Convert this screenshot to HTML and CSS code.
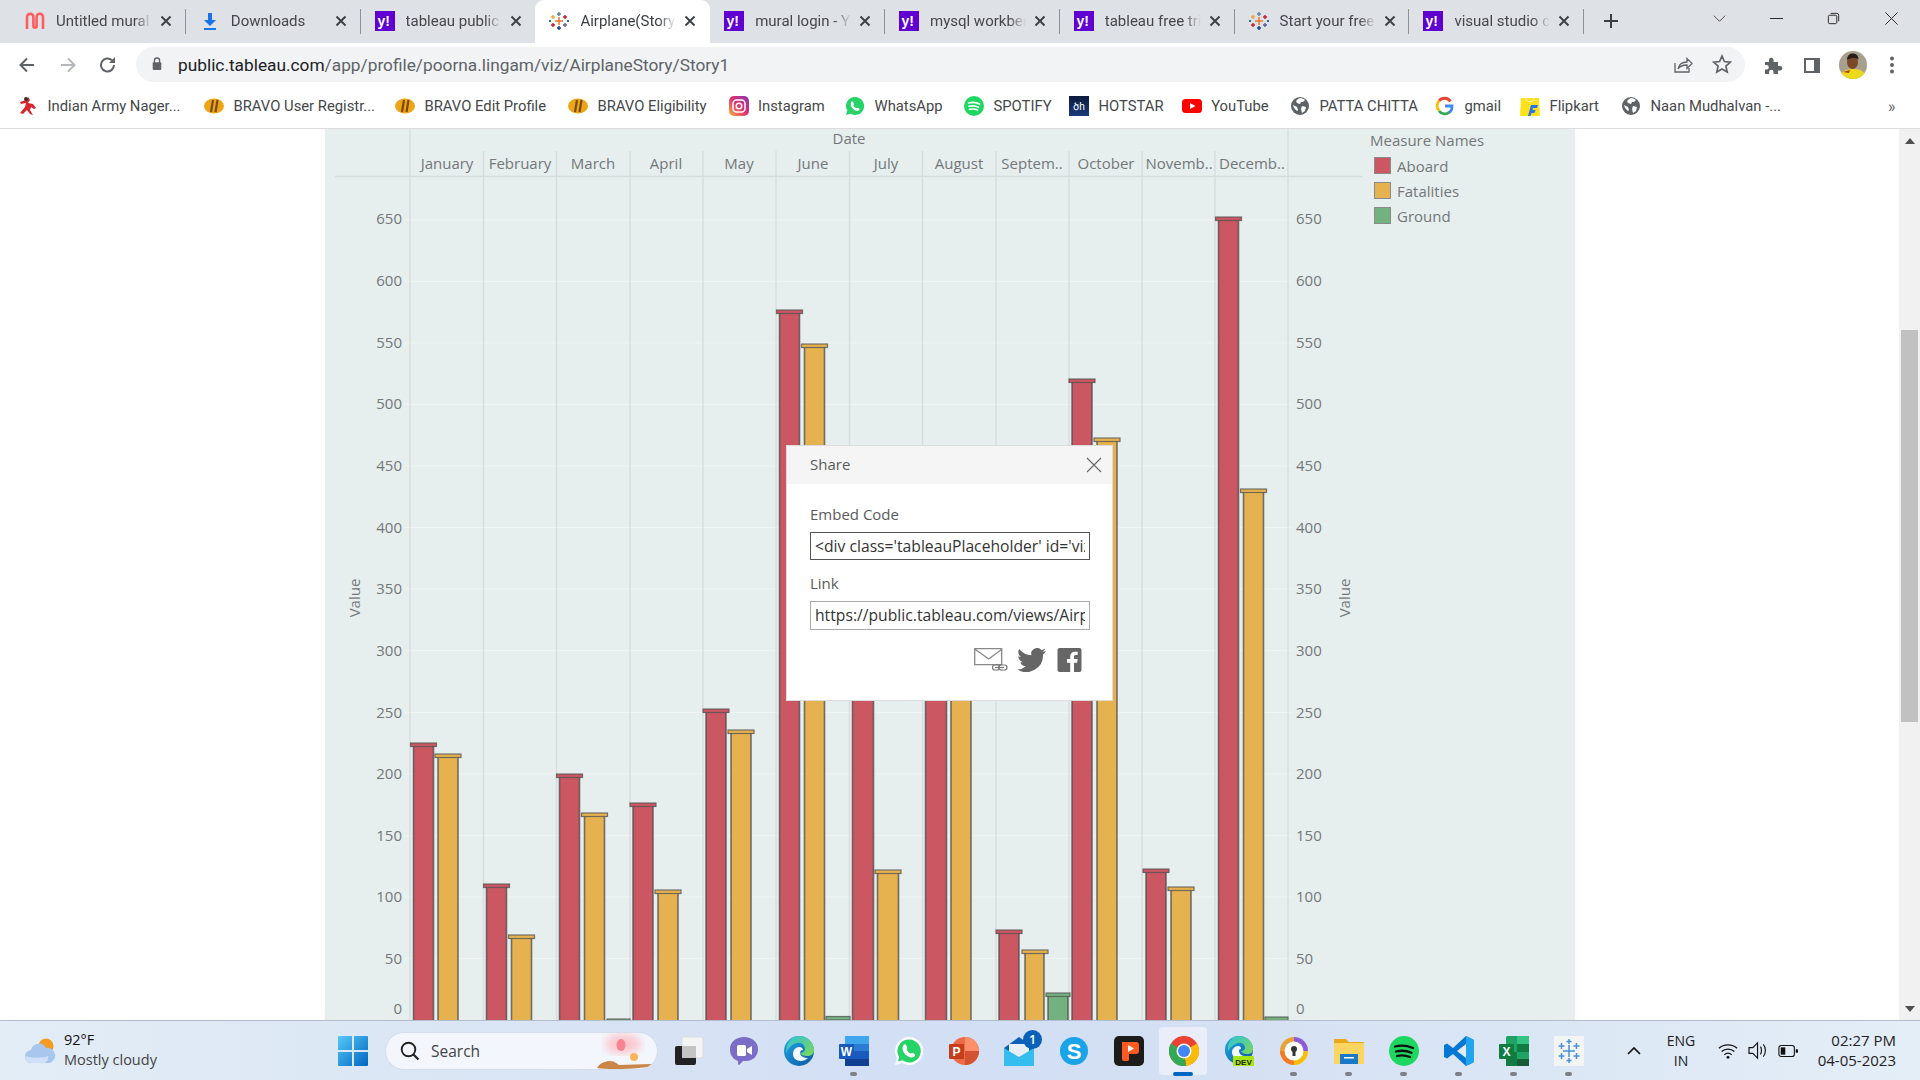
FILE: index.html
```html
<!DOCTYPE html>
<html lang="en">
<head>
<meta charset="utf-8">
<title>Airplane(Story) - Tableau Public</title>
<link rel="stylesheet" href="styles.css">
</head>
<body>
<svg class="defs" width="0" height="0" aria-hidden="true">
  <symbol id="yahoo" viewBox="0 0 20 20"><rect width="20" height="20" fill="#6001d2"/><text x="2.500" y="15" class="yh">y!</text></symbol>
  <symbol id="tabx" viewBox="0 0 12 12"><path d="M1.500 1.500l9 9M10.500 1.500l-9 9" stroke="#3c4043" stroke-width="1.900" fill="none"/></symbol>
  <symbol id="tableau" viewBox="0 0 20 20">
    <g fill="none" stroke-width="1.500">
      <path d="M10 6v8M6 10h8" stroke="#e8762c"/>
      <path d="M10 1v4M8 3h4" stroke="#5b879b"/>
      <path d="M10 15v4M8 17h4" stroke="#1f447e"/>
      <path d="M4 4v4M2 6h4" stroke="#f0a93a"/>
      <path d="M16 4v4M14 6h4" stroke="#c72035"/>
      <path d="M4 12v4M2 14h4" stroke="#c72035"/>
      <path d="M16 12v4M14 14h4" stroke="#5b6591"/>
      <path d="M1 9v2M0 10h2M19 9v2M18 10h2" stroke="#1f6b8a"/>
    </g>
  </symbol>
  <symbol id="globe" viewBox="0 0 20 20"><circle cx="10" cy="10" r="9" fill="#5f6368"/><path d="M10 2c2 0 4 1 5 2l-2 2h-2l-1 2-3-1-1-2 2-2zM12 10l4 1-1 4-3 2-1-4zM3 9l4 2 1 3-1 1-3-3z" fill="#fff"/></symbol>
  <symbol id="bravo" viewBox="0 0 20 20"><ellipse cx="10" cy="10" rx="10" ry="7.500" fill="#eca514"/><path d="M9 4 7 16M13.500 4l-2 12" stroke="#7b4a12" stroke-width="2.200" fill="none"/></symbol>
</svg>

<header class="tabstrip">
  <div class="tab"><svg class="fav" viewBox="0 0 20 20"><path d="M2 18V6a3.200 3.200 0 0 1 6.400 0v9a1.600 1.600 0 0 0 3.200 0V6A3.200 3.200 0 0 1 18 6v12" fill="none" stroke="#ff5c5c" stroke-width="2.600"/></svg><span class="tab-title">Untitled mural - Mural</span><svg class="tab-x"><use href="#tabx"/></svg></div>
  <div class="tab"><svg class="fav" viewBox="0 0 20 20"><path d="M8 2h4v7h4l-6 6-6-6h4zM4 17h12v2H4z" fill="#1a73e8"/></svg><span class="tab-title">Downloads</span><svg class="tab-x"><use href="#tabx"/></svg></div>
  <div class="tab before-active"><svg class="fav"><use href="#yahoo"/></svg><span class="tab-title">tableau public - Yahoo</span><svg class="tab-x"><use href="#tabx"/></svg></div>
  <div class="tab active"><svg class="fav"><use href="#tableau"/></svg><span class="tab-title">Airplane(Story) - Tableau</span><svg class="tab-x"><use href="#tabx"/></svg></div>
  <div class="tab"><svg class="fav"><use href="#yahoo"/></svg><span class="tab-title">mural login - Yahoo</span><svg class="tab-x"><use href="#tabx"/></svg></div>
  <div class="tab"><svg class="fav"><use href="#yahoo"/></svg><span class="tab-title">mysql workbench</span><svg class="tab-x"><use href="#tabx"/></svg></div>
  <div class="tab"><svg class="fav"><use href="#yahoo"/></svg><span class="tab-title">tableau free trial</span><svg class="tab-x"><use href="#tabx"/></svg></div>
  <div class="tab"><svg class="fav"><use href="#tableau"/></svg><span class="tab-title">Start your free trial</span><svg class="tab-x"><use href="#tabx"/></svg></div>
  <div class="tab"><svg class="fav"><use href="#yahoo"/></svg><span class="tab-title">visual studio code</span><svg class="tab-x"><use href="#tabx"/></svg></div>
  <svg class="newtab" viewBox="0 0 16 16"><path d="M8 1v14M1 8h14" stroke="#3c4043" stroke-width="2"/></svg>
  <div class="winctl">
    <svg class="wc wc-chev" viewBox="0 0 16 16"><path d="M2 5l6 6 6-6" fill="none" stroke="#444" stroke-width="1"/></svg>
    <svg class="wc wc-min" viewBox="0 0 16 16"><path d="M1 8h14" stroke="#222" stroke-width="1"/></svg>
    <svg class="wc wc-max" viewBox="0 0 16 16"><rect x="2.500" y="4.500" width="9" height="9" rx="1.500" fill="none" stroke="#222"/><path d="M5 2.500h6.500a2 2 0 0 1 2 2V11" fill="none" stroke="#222"/></svg>
    <svg class="wc wc-close" viewBox="0 0 16 16"><path d="M1.500 1.500l13 13M14.500 1.500l-13 13" stroke="#222" stroke-width="1"/></svg>
  </div>
</header>

<nav class="toolbar">
  <svg class="tool tool-back" viewBox="0 0 20 20"><path d="M17 10H4M10 3.500 3.500 10l6.500 6.500" fill="none" stroke="#5f6368" stroke-width="2"/></svg>
  <svg class="tool tool-fwd" viewBox="0 0 20 20"><path d="M3 10h13M10 3.500l6.500 6.500-6.500 6.500" fill="none" stroke="#b4b7bb" stroke-width="2"/></svg>
  <svg class="tool tool-reload" viewBox="0 0 20 20"><path d="M16 10a6.500 6.500 0 1 1-2-4.700" fill="none" stroke="#5f6368" stroke-width="2"/><path d="M17 2v6h-6z" fill="#5f6368"/></svg>
  <div class="omnibox">
    <svg class="lock" viewBox="0 0 14 18"><path d="M4 8V5a3 3 0 0 1 6 0v3" fill="none" stroke="#5f6368" stroke-width="1.600"/><rect x="2" y="7" width="10" height="9" rx="1.200" fill="#5f6368"/></svg>
    <span class="url"><span class="url-host">public.tableau.com</span>/app/profile/poorna.lingam/viz/AirplaneStory/Story1</span>
    <svg class="omni-share" viewBox="0 0 20 20"><path d="M2 9v9h14v-4" fill="none" stroke="#5f6368" stroke-width="1.300"/><path d="M5 15c1-5 5-7 9-7V4.500l5 5-5 5V11c-4 0-7 1-9 4z" fill="none" stroke="#5f6368" stroke-width="1.300"/></svg>
    <svg class="omni-star" viewBox="0 0 20 20"><path d="M10 2l2.400 5.500 6 .6-4.500 4 1.300 5.900L10 15l-5.200 3 1.300-5.900-4.500-4 6-.6z" fill="none" stroke="#5f6368" stroke-width="1.700"/></svg>
  </div>
  <svg class="tool tool-puzzle" viewBox="0 0 20 20"><path d="M2 7h4V5a2.300 2.300 0 0 1 4.600 0v2H15v4h2a2.300 2.300 0 0 1 0 4.600h-2V19H10.500v-2a2.200 2.200 0 0 0-4.400 0v2H2v-4.500h1.500a2.300 2.300 0 0 0 0-4.600H2z" fill="#5f6368"/></svg>
  <svg class="tool tool-side" viewBox="0 0 20 20"><rect x="2" y="3" width="16" height="15" fill="#5f6368"/><rect x="4" y="5" width="8" height="11" fill="#fff"/></svg>
  <svg class="avatar" viewBox="0 0 28 28"><defs><clipPath id="avc"><circle cx="14" cy="14" r="14"/></clipPath></defs><g clip-path="url(#avc)"><rect width="28" height="28" fill="#a89f8e"/><path d="M0 28c1-7 6-10 14-10s13 3 14 10z" fill="#ecd919"/><ellipse cx="13.500" cy="11" rx="5.500" ry="7" fill="#7a4a28"/><path d="M8 9c0-5 3-6.500 6-6.500s5.500 2 5.500 6c-3-2-7-2-11.500.5z" fill="#262019"/><path d="M4 21l7-2-1 3z" fill="#b33a2a"/></g></svg>
  <svg class="tool tool-menu" viewBox="0 0 20 20"><circle cx="10" cy="3.500" r="2" fill="#5f6368"/><circle cx="10" cy="10" r="2" fill="#5f6368"/><circle cx="10" cy="16.500" r="2" fill="#5f6368"/></svg>
</nav>

<nav class="bookmarks">
  <a class="bm"><svg class="bm-ic" viewBox="0 0 20 20"><path d="M10 1l2 3-2 3 5 1 3 4-2 1-3-2-1 3 3 5-3-1-3-4-4 4-3-1 5-6 1-4-5 1-1-2 6-2z" fill="#d8262c"/><circle cx="8" cy="3" r="2" fill="#333"/></svg>Indian Army Nager...</a>
  <a class="bm"><svg class="bm-ic"><use href="#bravo"/></svg>BRAVO User Registr...</a>
  <a class="bm"><svg class="bm-ic"><use href="#bravo"/></svg>BRAVO Edit Profile</a>
  <a class="bm"><svg class="bm-ic"><use href="#bravo"/></svg>BRAVO Eligibility</a>
  <a class="bm"><svg class="bm-ic" viewBox="0 0 20 20"><defs><linearGradient id="ig" x1="0" y1="1" x2="1" y2="0"><stop offset="0" stop-color="#fcb045"/><stop offset=".5" stop-color="#e1306c"/><stop offset="1" stop-color="#833ab4"/></linearGradient></defs><rect width="20" height="20" rx="5" fill="url(#ig)"/><rect x="4" y="4" width="12" height="12" rx="3.500" fill="none" stroke="#fff" stroke-width="1.500"/><circle cx="10" cy="10" r="2.800" fill="none" stroke="#fff" stroke-width="1.500"/></svg>Instagram</a>
  <a class="bm"><svg class="bm-ic" viewBox="0 0 20 20"><path d="M10 1a9 9 0 0 0-7.700 13.600L1 19l4.600-1.200A9 9 0 1 0 10 1z" fill="#25d366"/><path d="M6.500 5.500c1.500-1 3 3 2 3.500-.5.500 1.500 3 3 3 .8-1 3.500.5 3 1.800-1.500 2-4 1-6-.6S4.500 8 6.500 5.500z" fill="#fff"/></svg>WhatsApp</a>
  <a class="bm"><svg class="bm-ic" viewBox="0 0 20 20"><circle cx="10" cy="10" r="10" fill="#1ed760"/><path d="M4.500 7c4-1 8-.7 11 1M5 10.300c3.500-.8 7-.5 9.500 1M5.500 13.300c3-.6 6-.4 8 .8" fill="none" stroke="#fff" stroke-width="1.600" stroke-linecap="round"/></svg>SPOTIFY</a>
  <a class="bm"><svg class="bm-ic" viewBox="0 0 20 20"><defs><linearGradient id="hs" x1="0" y1="0" x2="0" y2="1"><stop offset="0" stop-color="#0c1a3c"/><stop offset="1" stop-color="#1a3a7a"/></linearGradient></defs><rect width="20" height="20" fill="url(#hs)"/><text x="10" y="14" class="hs">ծh</text></svg>HOTSTAR</a>
  <a class="bm"><svg class="bm-ic" viewBox="0 0 20 20"><rect y="3" width="20" height="14" rx="3.500" fill="#f00"/><path d="M8 7l5.500 3L8 13z" fill="#fff"/></svg>YouTube</a>
  <a class="bm"><svg class="bm-ic"><use href="#globe"/></svg>PATTA CHITTA</a>
  <a class="bm"><svg class="bm-ic" viewBox="0 0 20 20"><path d="M15.500 5.500A7 7 0 0 0 4 5" fill="none" stroke="#ea4335" stroke-width="2.800"/><path d="M4.200 4.800a7 7 0 0 0 0 10" fill="none" stroke="#fbbc05" stroke-width="2.800"/><path d="M4 15a7 7 0 0 0 10.500 1" fill="none" stroke="#34a853" stroke-width="2.800"/><path d="M14 16.500c2-1 3-3.500 3-6.500h-7" fill="none" stroke="#4285f4" stroke-width="2.800"/></svg>gmail</a>
  <a class="bm"><svg class="bm-ic" viewBox="0 0 20 20"><path d="M1 2h18l1 18H0z" fill="#ffe11b"/><path d="M6 2c0 5 8 5 8 0" fill="none" stroke="#fff" stroke-width=".8"/><path d="M11 9h7l-1 3h-4l-.500 2h3l-1 3h-3l-1 3H8z" fill="#2874f0"/></svg>Flipkart</a>
  <a class="bm"><svg class="bm-ic"><use href="#globe"/></svg>Naan Mudhalvan -...</a>
  <span class="bm-more">»</span>
</nav>

<main class="content">
  <div class="page">
    <section class="panel">
      <svg class="chart" viewBox="325 129 1038 891" role="img" aria-label="Value by month and measure">
        <g class="gridlines">
          <path d="M405 220H1292M405 281.500H1292M405 343H1292M405 404.500H1292M405 466H1292M405 527.500H1292M405 589H1292M405 650.500H1292M405 712.500H1292M405 774H1292M405 835.500H1292M405 897H1292M405 958.500H1292"/>
        </g>
        <g class="sep">
          <path d="M410 129V1020M1288 129V1020M483.500 151V1020M556.500 151V1020M630 151V1020M703 151V1020M776 151V1020M849.500 151V1020M922.500 151V1020M996 151V1020M1069 151V1020M1142 151V1020M1215 151V1020"/>
          <path d="M335 176.500H1362"/>
        </g>
        <text x="849" y="144" class="axis mid">Date</text>
        <g class="axis mid">
          <text x="447" y="169">January</text><text x="520" y="169">February</text><text x="593" y="169">March</text><text x="666" y="169">April</text><text x="739" y="169">May</text><text x="813" y="169">June</text><text x="886" y="169">July</text><text x="959" y="169">August</text><text x="1032" y="169">Septem..</text><text x="1106" y="169">October</text><text x="1179" y="169">Novemb..</text><text x="1252" y="169">Decemb..</text>
        </g>
        <g class="axis end">
          <text x="402" y="224">650</text><text x="402" y="285.500">600</text><text x="402" y="348">550</text><text x="402" y="408.500">500</text><text x="402" y="471">450</text><text x="402" y="533">400</text><text x="402" y="594">350</text><text x="402" y="656">300</text><text x="402" y="718">250</text><text x="402" y="779">200</text><text x="402" y="840.500">150</text><text x="402" y="902">100</text><text x="402" y="964">50</text><text x="402" y="1014">0</text>
        </g>
        <g class="axis">
          <text x="1296" y="224">650</text><text x="1296" y="285.500">600</text><text x="1296" y="348">550</text><text x="1296" y="408.500">500</text><text x="1296" y="471">450</text><text x="1296" y="533">400</text><text x="1296" y="594">350</text><text x="1296" y="656">300</text><text x="1296" y="718">250</text><text x="1296" y="779">200</text><text x="1296" y="840.500">150</text><text x="1296" y="902">100</text><text x="1296" y="964">50</text><text x="1296" y="1014">0</text>
        </g>
        <text class="axis mid" transform="translate(360 598) rotate(-90)">Value</text>
        <text class="axis mid" transform="translate(1350 598) rotate(-90)">Value</text>

        <g class="bars red">
          <rect x="413.500" y="745" width="20" height="280"/><rect x="486.500" y="886" width="20" height="140"/><rect x="559.500" y="776" width="20" height="250"/><rect x="633" y="805" width="20" height="220"/><rect x="706" y="711" width="20" height="310"/><rect x="779.500" y="312" width="20" height="710"/><rect x="852.500" y="600" width="21" height="425"/><rect x="925.500" y="600" width="21" height="425"/><rect x="999" y="932" width="20" height="95"/><rect x="1072" y="381" width="20" height="640"/><rect x="1146" y="871" width="20" height="155"/><rect x="1218.500" y="219" width="20" height="805"/>
        </g>
        <g class="caps red">
          <rect x="410.500" y="743" width="26" height="3.500"/><rect x="483.500" y="884" width="26" height="3.500"/><rect x="556.500" y="774" width="26" height="3.500"/><rect x="630" y="803" width="26" height="3.500"/><rect x="703" y="709" width="26" height="3.500"/><rect x="776.500" y="310" width="26" height="3.500"/><rect x="996" y="930" width="26" height="3.500"/><rect x="1069" y="379" width="26" height="3.500"/><rect x="1143" y="869" width="26" height="3.500"/><rect x="1215.500" y="217" width="26" height="3.500"/>
        </g>
        <g class="bars yellow">
          <rect x="438" y="756" width="20" height="270"/><rect x="511.500" y="937" width="20" height="90"/><rect x="584.500" y="815" width="20" height="210"/><rect x="658" y="892" width="20" height="135"/><rect x="731" y="732" width="20" height="290"/><rect x="804.500" y="346" width="20" height="680"/><rect x="877.500" y="872" width="21" height="150"/><rect x="951" y="600" width="20" height="425"/><rect x="1025" y="952" width="19" height="75"/><rect x="1097" y="440" width="20" height="585"/><rect x="1171" y="889" width="20" height="135"/><rect x="1243.500" y="491" width="20" height="535"/>
        </g>
        <g class="caps yellow">
          <rect x="435" y="754" width="26" height="3.500"/><rect x="508.500" y="935" width="26" height="3.500"/><rect x="581.500" y="813" width="26" height="3.500"/><rect x="655" y="890" width="26" height="3.500"/><rect x="728" y="730" width="26" height="3.500"/><rect x="801.500" y="344" width="26" height="3.500"/><rect x="875" y="870" width="26" height="3.500"/><rect x="1022" y="950" width="26" height="3.500"/><rect x="1094" y="438" width="26" height="3.500"/><rect x="1168" y="887" width="26" height="3.500"/><rect x="1240.500" y="489" width="26" height="3.500"/>
        </g>
        <g class="bars green">
          <rect x="1048" y="995" width="20" height="30"/>
        </g>
        <g class="caps green">
          <rect x="1046" y="993" width="24" height="3.500"/><rect x="607" y="1019" width="23" height="3"/><rect x="826" y="1016.500" width="24" height="3.500"/><rect x="1265" y="1017" width="23" height="3.500"/>
        </g>
      </svg>
      <aside class="legend">
        <h2 class="legend-title">Measure Names</h2>
        <div class="legend-row"><span class="swatch sw-red"></span>Aboard</div>
        <div class="legend-row"><span class="swatch sw-yellow"></span>Fatalities</div>
        <div class="legend-row"><span class="swatch sw-green"></span>Ground</div>
      </aside>
    </section>
  </div>
  <div class="scrollbar">
    <span class="sb-up"></span>
    <span class="sb-thumb"></span>
    <span class="sb-down"></span>
  </div>

  <div class="dialog">
    <div class="dialog-head">
      <span>Share</span>
      <svg class="dialog-x" viewBox="0 0 16 16"><path d="M1 1l14 14M15 1 1 15" stroke="#666" stroke-width="1.100"/></svg>
    </div>
    <div class="dialog-body">
      <label class="field-label">Embed Code</label>
      <div class="field field-focus"><span>&lt;div class='tableauPlaceholder' id='viz1683190000000' style='position: relative'&gt;</span></div>
      <label class="field-label field-label-2">Link</label>
      <div class="field"><span>https://public.tableau.com/views/AirplaneStory/Story1</span></div>
      <div class="share-icons">
        <svg class="sh-mail" viewBox="0 0 34 24"><path d="M.700.700h27v16H.700zM.700 1l14 10 13.500-10" fill="none" stroke="#888" stroke-width="1.300"/><rect x="18.500" y="17" width="7" height="5" rx="2.500" fill="#fff" stroke="#777" stroke-width="1.200"/><rect x="25" y="17" width="8" height="5" rx="2.500" fill="#fff" stroke="#777" stroke-width="1.200"/><path d="M21 19.500h9" stroke="#777" stroke-width="1.200"/></svg>
        <svg class="sh-tw" viewBox="0 0 24 20"><path d="M24 2.400c-.9.400-1.800.7-2.800.8 1-.6 1.800-1.600 2.200-2.700-1 .6-2 1-3.100 1.200A4.900 4.900 0 0 0 11.900 6.100C7.800 5.900 4.200 3.900 1.700.9.400 3.100 1 6 3.200 7.500c-.8 0-1.600-.2-2.200-.6 0 2.400 1.700 4.400 3.900 4.900-.7.200-1.500.2-2.200.1.600 2 2.400 3.400 4.600 3.400A9.900 9.900 0 0 1 0 17.800 14 14 0 0 0 21.600 5.400c1-.7 1.800-1.600 2.400-3z" fill="#666"/></svg>
        <svg class="sh-fb" viewBox="0 0 24 24"><rect width="24" height="24" rx="2" fill="#666"/><path d="M16.500 24v-9.300h3.100l.5-3.600h-3.600V8.800c0-1 .3-1.800 1.800-1.800h1.900V3.800c-.3 0-1.500-.1-2.800-.1-2.800 0-4.700 1.700-4.700 4.800v2.600H9.500v3.600h3.200V24z" fill="#fff"/></svg>
      </div>
    </div>
  </div>
</main>

<footer class="taskbar">
  <div class="weather">
    <svg class="weather-ic" viewBox="0 0 32 26"><circle cx="22" cy="8" r="7.500" fill="#f59a23"/><path d="M8 25a6.500 6.500 0 0 1-1-13 8 8 0 0 1 15-2 6 6 0 0 1 3 15z" fill="#a8c6ee"/><path d="M1.500 18c6 2 16 2 23 0-.5 4-2 7-5 7H8c-4 0-6.500-3-6.500-7z" fill="#cfe0f8"/></svg>
    <div class="weather-text"><span class="wt-temp">92°F</span><span>Mostly cloudy</span></div>
  </div>
  <svg class="start" viewBox="0 0 30 30"><defs><linearGradient id="st" x1="0" y1="0" x2="1" y2="1"><stop offset="0" stop-color="#56c8f8"/><stop offset="1" stop-color="#0067c0"/></linearGradient></defs><path d="M0 1a1 1 0 0 1 1-1h13v14H0zM16 0h13a1 1 0 0 1 1 1v13H16zM0 16h14v14H1a1 1 0 0 1-1-1zM16 16h14v13a1 1 0 0 1-1 1H16z" fill="url(#st)"/></svg>
  <div class="search">
    <svg class="search-ic" viewBox="0 0 20 20"><circle cx="8.500" cy="8.500" r="6.800" fill="none" stroke="#222" stroke-width="1.900"/><path d="M13.500 13.500l5 5" stroke="#222" stroke-width="2.200"/></svg>
    <span>Search</span>
    <svg class="search-art" viewBox="0 0 60 38"><defs><filter id="bl"><feGaussianBlur stdDeviation="4"/></filter></defs><ellipse cx="26" cy="12" rx="18" ry="10" fill="#ffb3b8" filter="url(#bl)" opacity=".7"/><ellipse cx="24" cy="13" rx="4.500" ry="6" fill="#f8838e"/><circle cx="37" cy="25" r="4" fill="#fbb55f"/><path d="M0 36c3-5 8-7 13-7s7 3 9 4l32-1c2 0 4 0 4 1-10 4-45 5-58 3z" fill="#c98646"/></svg>
  </div>
  <div class="apps">
    <div class="app"><svg viewBox="0 0 30 30"><rect x="8" y="1" width="21" height="21" rx="2" fill="#f4f4f4" stroke="#ddd"/><rect x="1" y="10" width="21" height="19" rx="2" fill="#222"/><rect x="8" y="10" width="14" height="12" fill="#c4c4c4"/></svg></div>
    <div class="app"><svg viewBox="0 0 30 30"><path d="M15 1c8 0 14 5 14 12s-5 12-12 12h-3l-4 4c-1 0-1-1-1-4C4 23 1 19 1 13 1 6 7 1 15 1z" fill="#7b6cc6"/><rect x="8" y="9" width="9" height="11" rx="1.500" fill="#fff"/><path d="M18 13l5-3v9l-5-3z" fill="#fff"/></svg></div>
    <div class="app"><svg viewBox="0 0 30 30"><defs><linearGradient id="ed" x1="0" y1="0" x2="1" y2="1"><stop offset="0" stop-color="#1fa8e8"/><stop offset="1" stop-color="#0c59a4"/></linearGradient><linearGradient id="edg" x1="0" y1="0" x2="1" y2="1"><stop offset="0" stop-color="#2fc3d8"/><stop offset="1" stop-color="#7ed957"/></linearGradient></defs><circle cx="15" cy="15" r="15" fill="url(#ed)"/><path d="M15 0c8 0 15 6 15 14 0 4-3 6-7 6-3 0-6-1-7-3 3 0 5-2 5-4 0-4-4-7-8-6-5 1-9 5-11 10C2 7 7 0 15 0z" fill="url(#edg)"/><path d="M9 18c0-4 3-7 6-7 3 0 4 2 4 3-2 0-3 1-3 3 0 3 4 5 8 5-2 2-5 3-7 3-5 0-8-3-8-7z" fill="#f4f7fd"/></svg></div>
    <div class="app run"><svg viewBox="0 0 30 30"><rect x="6" y="0" width="24" height="30" rx="1.500" fill="#2b7cd3"/><rect x="6" y="0" width="24" height="8" fill="#41a5ee"/><rect x="6" y="15" width="24" height="8" fill="#185abd"/><rect x="6" y="23" width="24" height="7" fill="#103f91"/><rect y="8" width="15" height="15" rx="1" fill="#185abd"/><text x="7.500" y="20" class="ic-letter">W</text></svg></div>
    <div class="app"><svg viewBox="0 0 30 30"><path d="M15 1a14 14 0 0 0-12 21L1 29l7-2A14 14 0 1 0 15 1z" fill="#fff"/><path d="M15 3.500a11.500 11.500 0 0 0-9.800 17.600L4 25.500l4.500-1.200A11.500 11.500 0 1 0 15 3.500z" fill="#25d366"/><path d="M10 8.500c2-1.500 4 4 3 5-.6.600 2.200 4 4 4 1-1.500 5 .5 4 2.500-2 2.500-6 1.500-9-1s-5-7.500-2-10.500z" fill="#fff"/></svg></div>
    <div class="app"><svg viewBox="0 0 30 30"><circle cx="16" cy="15" r="14" fill="#ed6c47"/><path d="M16 1a14 14 0 0 1 14 14H16z" fill="#ff8f6b"/><path d="M16 15h14a14 14 0 0 1-14 14z" fill="#d35230"/><rect y="8" width="15" height="15" rx="1" fill="#c43e1c"/><text x="7.500" y="20" class="ic-letter">P</text></svg></div>
    <div class="app app-mail"><svg viewBox="0 0 30 30"><path d="M0 12 15 1l15 11v18H0z" fill="#0a62b8"/><path d="M5 8h20v10l-10 6-10-6z" fill="#e8eef5"/><path d="M0 12l15 9 15-9v18H0z" fill="#35bdf0"/></svg><span class="badge">1</span></div>
    <div class="app"><svg viewBox="0 0 30 30"><circle cx="15" cy="15" r="14" fill="#1aa3e8"/><text x="15" y="23" class="ic-s">S</text></svg></div>
    <div class="app"><svg viewBox="0 0 30 30"><rect width="30" height="30" rx="5" fill="#1c1c1c"/><path d="M8 6h14a3 3 0 0 1 3 3v6a3 3 0 0 1-3 3h-7v6a2 2 0 0 1-2 1h-3a2 2 0 0 1-2-2z" fill="#ff5a1f"/><path d="M14 9l6 3.500-6 3.500z" fill="#fff"/></svg></div>
    <div class="app app-active"><svg viewBox="0 0 30 30"><circle cx="15" cy="15" r="15" fill="#ea4335"/><path d="M15 15 28 7.500A15 15 0 0 1 17 29.900z" fill="#fbbc05"/><path d="M15 15 17 29.900A15 15 0 0 1 2 7.500z" fill="#34a853"/><circle cx="15" cy="15" r="7.500" fill="#fff"/><circle cx="15" cy="15" r="6" fill="#4285f4"/></svg></div>
    <div class="app"><svg viewBox="0 0 30 30"><circle cx="15" cy="14" r="14" fill="url(#ed)"/><path d="M15 0c8 0 14 6 14 13 0 3-2 5-6 5-3 0-5-1-6-3 2 0 4-1 4-3 0-3-3-6-7-5-4 1-8 4-10 8C3 6 8 0 15 0z" fill="url(#edg)"/><path d="M8 16c0-3 3-6 6-6 2 0 3 1 3 3-2 0-2 1-2 2 0 3 3 5 6 5-2 2-4 3-6 3-4 0-7-3-7-7z" fill="#f4f7fd"/><rect x="9" y="20" width="21" height="10" rx="1" fill="#a6e712"/><text x="19.500" y="28.500" class="ic-dev">DEV</text></svg></div>
    <div class="app run"><svg viewBox="0 0 30 30"><path d="M15 1a14 14 0 0 1 14 14H15z" fill="#8b5cd6"/><path d="M29 15a14 14 0 0 1-14 14V15z" fill="#fbbc05"/><path d="M15 29A14 14 0 0 1 1 15h14z" fill="#f47b20"/><path d="M1 15A14 14 0 0 1 15 1v14z" fill="#e8a33a"/><circle cx="15" cy="15" r="9.500" fill="#fff"/><circle cx="15" cy="13" r="3" fill="#333"/><path d="M13.500 14h3v6h-3z" fill="#333"/></svg></div>
    <div class="app run"><svg viewBox="0 0 30 30"><path d="M0 3h12l3 3h15v21H0z" fill="#e8a91e"/><rect y="7" width="30" height="21" fill="#fbd560"/><rect x="6" y="18" width="18" height="10" fill="#1a78c9"/><rect x="10" y="21" width="10" height="1.500" fill="#fff"/></svg></div>
    <div class="app run"><svg viewBox="0 0 30 30"><circle cx="15" cy="15" r="15" fill="#1ed760"/><path d="M6 10.500c6-1.500 12-1 18 1.500M7 15.500c5-1.200 11-.8 15.500 1.300M8 20c4-1 9-.7 13 1" fill="none" stroke="#111" stroke-width="2.300" stroke-linecap="round"/></svg></div>
    <div class="app run"><svg viewBox="0 0 30 30"><path d="M22 0l8 4v22l-8 4-13-12-6 4.500-3-1.500V9l3-1.500L9 12z" fill="#0078d4"/><path d="M22 8v14l-9-7z" fill="#e4ecf8"/><path d="M22 0l8 4v22l-8 4z" fill="#22a5f0"/></svg></div>
    <div class="app run"><svg viewBox="0 0 30 30"><rect x="7" width="23" height="30" rx="1.500" fill="#21a366"/><rect x="18" width="12" height="8" fill="#33c481"/><rect x="18" y="8" width="12" height="8" fill="#107c41"/><rect x="18" y="23" width="12" height="7" fill="#185c37"/><rect x="7" y="16" width="11" height="14" fill="#107c41"/><rect y="8" width="15" height="15" rx="1" fill="#107c41"/><text x="7.500" y="20" class="ic-letter">X</text></svg></div>
    <div class="app run"><svg viewBox="0 0 30 30"><rect width="30" height="30" fill="#f3f5f5"/><path d="M15 9v12M9 15h12M15 3v5M12.500 5.500h5M15 22v5M12.500 24.500h5M7.500 7v6M4.500 10h6M22.500 7v6M19.500 10h6M7.500 17v6M4.500 20h6M22.500 17v6M19.500 20h6" fill="none" stroke="#4a90d9" stroke-width="1.500"/></svg></div>
  </div>
  <div class="tray">
    <svg class="tray-chev" viewBox="0 0 14 10"><path d="M1 8l6-6 6 6" fill="none" stroke="#111" stroke-width="1.600"/></svg>
    <div class="tray-lang"><span>ENG</span><span>IN</span></div>
    <svg class="tray-wifi" viewBox="0 0 22 18"><path d="M1 6c5.500-5 14.500-5 20 0M4 9.500c4-3.500 10-3.500 14 0M7 13c2.400-2 5.600-2 8 0" fill="none" stroke="#111" stroke-width="1.400"/><circle cx="11" cy="16" r="1.600" fill="#111"/></svg>
    <svg class="tray-vol" viewBox="0 0 22 20"><path d="M1 7h4l5-5v16l-5-5H1z" fill="none" stroke="#111" stroke-width="1.200"/><path d="M13 6c1.500 2 1.500 6 0 8M16 3.500c3 3 3 10 0 13" fill="none" stroke="#111" stroke-width="1.200"/></svg>
    <svg class="tray-bat" viewBox="0 0 22 14"><rect x="1" y="1" width="17" height="12" rx="2.500" fill="none" stroke="#111" stroke-width="1.200"/><rect x="3" y="3" width="5" height="8" fill="#111"/><path d="M19.500 5h1.500a1 1 0 0 1 1 1v2a1 1 0 0 1-1 1h-1.500z" fill="#111"/></svg>
    <div class="tray-clock"><span>02:27 PM</span><span>04-05-2023</span></div>
  </div>
</footer>
</body>
</html>
```
FILE: styles.css
```css
* { box-sizing: border-box; }
html, body { margin: 0; height: 100%; }
body {
  width: 1920px;
  height: 1080px;
  overflow: hidden;
  display: flex;
  flex-direction: column;
  font-family: Roboto, "Liberation Sans", sans-serif;
  color: #3c4043;
  background: #fff;
}
.defs { position: absolute; }
.yh { font: bold 14px "Liberation Sans", sans-serif; fill: #fff; }
.hs { font: 10px "Liberation Sans", sans-serif; fill: #fff; text-anchor: middle; }

/* Tab strip */
.tabstrip {
  height: 43px;
  flex: none;
  display: flex;
  padding-left: 11px;
  background: #dee1e6;
  position: relative;
}
.tab {
  width: 174.8px;
  flex: none;
  display: flex;
  align-items: center;
  padding: 0 0 1px 14px;
  position: relative;
  font-size: 15px;
  color: #45474a;
}
.tab::after {
  content: "";
  position: absolute;
  right: 0;
  top: 9px;
  height: 25px;
  width: 1px;
  background: #8f9398;
}
.tab.active::after, .tab.before-active::after { display: none; }
.tab.active {
  background: #fff;
  border-radius: 9px 9px 0 0;
  color: #3c4043;
}
.fav { width: 20px; height: 20px; flex: none; }
.tab-title {
  width: 96px;
  margin-left: 11px;
  white-space: nowrap;
  overflow: hidden;
  flex: none;
  -webkit-mask-image: linear-gradient(to right, #000 82%, transparent 100%);
  mask-image: linear-gradient(to right, #000 82%, transparent 100%);
}
.tab-x { margin-left: 8px; width: 12px; height: 12px; flex: none; }
.newtab { width: 16px; height: 16px; margin: 13px 0 0 19px; flex: none; }
.winctl { margin-left: auto; display: flex; align-items: flex-start; padding-right: 21px; padding-top: 11px; }
.wc { width: 15px; height: 15px; flex: none; }
.wc-min { margin-left: 42px; }
.wc-max { margin-left: 42px; }
.wc-close { margin-left: 43px; }

/* Toolbar */
.toolbar {
  height: 43px;
  flex: none;
  display: flex;
  align-items: center;
  background: #fff;
}
.tool { width: 20px; height: 20px; flex: none; }
.tool-back { margin-left: 17px; }
.tool-fwd { margin-left: 21px; }
.tool-reload { margin-left: 20px; }
.omnibox {
  margin-left: 18px;
  width: 1609px;
  height: 35px;
  margin-top: -1px;
  border-radius: 18px;
  background: #f1f3f4;
  display: flex;
  align-items: center;
  padding-left: 15px;
  flex: none;
}
.lock { width: 12px; height: 16px; flex: none; }
.url { margin: 2px 0 0 15px; font-size: 17.3px; color: #5f6368; white-space: nowrap; }
.url-host { color: #202124; }
.omni-share { width: 20px; height: 20px; margin-left: auto; }
.omni-star { width: 20px; height: 20px; margin-left: 19px; margin-right: 13px; }
.tool-puzzle { margin-left: 18px; }
.tool-side { margin-left: 19px; }
.avatar { width: 28px; height: 28px; margin-left: 17px; flex: none; }
.tool-menu { margin-left: 15px; }

/* Bookmarks */
.bookmarks {
  height: 43px;
  flex: none;
  display: grid;
  grid-template-columns: 186px 191px 173px 160.5px 116.5px 119px 105px 112.7px 108.3px 145px 85px 101px 1fr 32px;
  align-items: center;
  padding: 0 0 2px 18px;
  background: #fff;
  border-bottom: 1px solid #dcdcdc;
}
.bm {
  display: flex;
  align-items: center;
  gap: 9.500px;
  font-size: 14.8px;
  color: #45474a;
  white-space: nowrap;
}
.bm-ic { width: 20px; height: 20px; flex: none; }
.bm-more { font-size: 16px; color: #5f6368; }

/* Content */
.content {
  flex: 1;
  min-height: 0;
  display: flex;
  position: relative;
  overflow: hidden;
  background: #fff;
}
.page { flex: 1; padding-left: 325px; overflow: hidden; }
.panel {
  width: 1250px;
  height: 891px;
  background: #e6efee;
  box-shadow: 0 0 10px rgba(0,0,0,.03);
  display: flex;
}
.chart { width: 1038px; height: 891px; flex: none; display: block; }
.gridlines path { stroke: #f0f4f3; stroke-width: 1; fill: none; }
.sep path { stroke: #d8dcdc; stroke-width: 1.4; fill: none; }
.axis text, text.axis { font-family: "Open Sans", sans-serif; font-size: 15px; fill: #74777a; }
.mid { text-anchor: middle; }
.end { text-anchor: end; }
.bars rect { stroke: rgba(75,75,75,.75); stroke-width: 1.6; }
.caps rect { stroke: rgba(85,85,85,.8); stroke-width: 1.2; }
.red rect { fill: #cb5763; }
.yellow rect { fill: #e6b24f; }
.green rect { fill: #73b27e; }
.legend { padding: 3px 0 0 7px; font-family: "Open Sans", sans-serif; font-size: 15px; color: #74777a; }
.legend-title { margin: 0 0 4px; font-weight: 400; font-size: 15px; line-height: 17px; }
.legend-row { display: flex; align-items: center; height: 25px; padding-left: 4px; }
.swatch { width: 17px; height: 17px; margin-right: 6px; border: 1px solid #8a8a8a; }
.sw-red { background: #cb5763; }
.sw-yellow { background: #e6b24f; }
.sw-green { background: #73b27e; }

/* Scrollbar */
.scrollbar {
  width: 21px;
  flex: none;
  background: #f1f1f1;
  display: flex;
  flex-direction: column;
  align-items: center;
}
.sb-up { margin-top: 9px; border: 5px solid transparent; border-top: 0; border-bottom: 6px solid #505050; }
.sb-thumb { width: 17px; height: 392px; margin-top: 186px; background: #c1c1c1; }
.sb-down { margin-top: auto; margin-bottom: 8px; border: 5px solid transparent; border-bottom: 0; border-top: 6px solid #505050; }

/* Dialog */
.dialog {
  position: absolute;
  left: 786px;
  top: 316px;
  width: 327px;
  height: 256px;
  background: #fff;
  border: 1px solid #dcdcdc;
  font-family: "Open Sans", sans-serif;
  color: #5b5b5b;
  font-size: 15px;
}
.dialog-head {
  height: 38px;
  background: #f5f5f5;
  display: flex;
  align-items: center;
  justify-content: space-between;
  padding: 0 10px 2px 23px;
}
.dialog-x { width: 16px; height: 16px; margin-top: 2px; }
.dialog-body { padding: 20px 22px 0 23px; }
.field-label { display: block; line-height: 20px; }
.field-label-2 { margin-top: 13px; }
.field {
  height: 29px;
  margin-top: 8px;
  padding: 0 4px 2px 4px;
  border: 1px solid #aaa;
  display: flex;
  align-items: center;
  font-family: "Open Sans", sans-serif;
  font-size: 15.7px;
  color: #333;
  background: #fff;
}
.field span { overflow: hidden; white-space: nowrap; }
.field-focus { border-color: #555; height: 28px; padding-bottom: 1px; }
.share-icons { display: flex; align-items: center; justify-content: flex-end; margin-top: 18px; padding-right: 8px; }
.sh-mail { width: 34px; height: 24px; }
.sh-tw { width: 29px; height: 24px; margin-left: 9px; }
.sh-fb { width: 25px; height: 24px; margin-left: 11px; }

/* Taskbar */
.taskbar {
  height: 60px;
  flex: none;
  display: flex;
  align-items: center;
  background: linear-gradient(90deg, #e3edf6 0%, #d3dff4 45%, #d3dff3 60%, #e4eef7 100%);
  border-top: 1px solid #b5bccb;
  color: #222;
  font-family: "Open Sans", sans-serif;
}
.weather { display: flex; align-items: center; width: 314px; margin-left: 24px; flex: none; }
.weather-ic { width: 32px; height: 26px; flex: none; }
.weather-text { display: flex; flex-direction: column; margin: -2px 0 0 8px; font-size: 14.5px; line-height: 20px; color: #444; }
.wt-temp { color: #111; }
.start { width: 30px; height: 30px; flex: none; }
.search {
  margin-left: 17px;
  width: 273px;
  height: 38px;
  border-radius: 19px;
  background: #f3f6fd;
  border: 1px solid #d5dcea;
  display: flex;
  align-items: center;
  padding-left: 14px;
  font-size: 15.5px;
  color: #444;
  flex: none;
  overflow: hidden;
}
.search-ic { width: 20px; height: 20px; margin-right: 11px; flex: none; }
.search-art { width: 60px; height: 38px; margin-left: auto; flex: none; }
.apps { margin-left: 3px; display: flex; flex: none; }
.app {
  width: 55px;
  height: 48px;
  display: flex;
  align-items: center;
  justify-content: center;
  position: relative;
  flex: none;
}
.app svg { width: 30px; height: 30px; }
.run::after {
  content: "";
  position: absolute;
  bottom: -1px;
  left: 24px;
  width: 7px;
  height: 4px;
  border-radius: 2px;
  background: #7d8086;
}
.app-active::before {
  content: "";
  position: absolute;
  left: 3px;
  top: 0;
  width: 48px;
  height: 48px;
  background: #e9eefa;
  border-radius: 4px;
}
.app-active svg { position: relative; }
.app-active::after {
  content: "";
  position: absolute;
  bottom: -1px;
  left: 17px;
  width: 20px;
  height: 4px;
  border-radius: 2px;
  background: #0067c0;
}
.badge {
  position: absolute;
  top: 3px;
  right: 4px;
  width: 19px;
  height: 19px;
  border-radius: 50%;
  background: #0a62b8;
  color: #fff;
  font-size: 12.5px;
  font-weight: 600;
  display: flex;
  align-items: center;
  justify-content: center;
}
.ic-letter { font: bold 12px "Liberation Sans", sans-serif; fill: #fff; text-anchor: middle; }
.ic-s { font: bold 22px "Liberation Sans", sans-serif; fill: #fff; text-anchor: middle; }
.ic-dev { font: bold 8px "Liberation Sans", sans-serif; fill: #222; text-anchor: middle; }
.tray { display: flex; align-items: center; flex: 1; padding-left: 31px; padding-right: 24px; }
.tray-chev { width: 14px; height: 10px; flex: none; }
.tray-lang { display: flex; flex-direction: column; align-items: center; margin-left: 23px; width: 34px; font-size: 14px; line-height: 20px; }
.tray-wifi { width: 20px; height: 18px; margin-left: 20px; flex: none; }
.tray-vol { width: 21px; height: 19px; margin-left: 10px; flex: none; }
.tray-bat { width: 20px; height: 14px; margin-left: 9px; flex: none; }
.tray-clock { margin-left: auto; display: flex; flex-direction: column; align-items: flex-end; font-size: 15px; line-height: 20px; margin-top: -2px; }
```
